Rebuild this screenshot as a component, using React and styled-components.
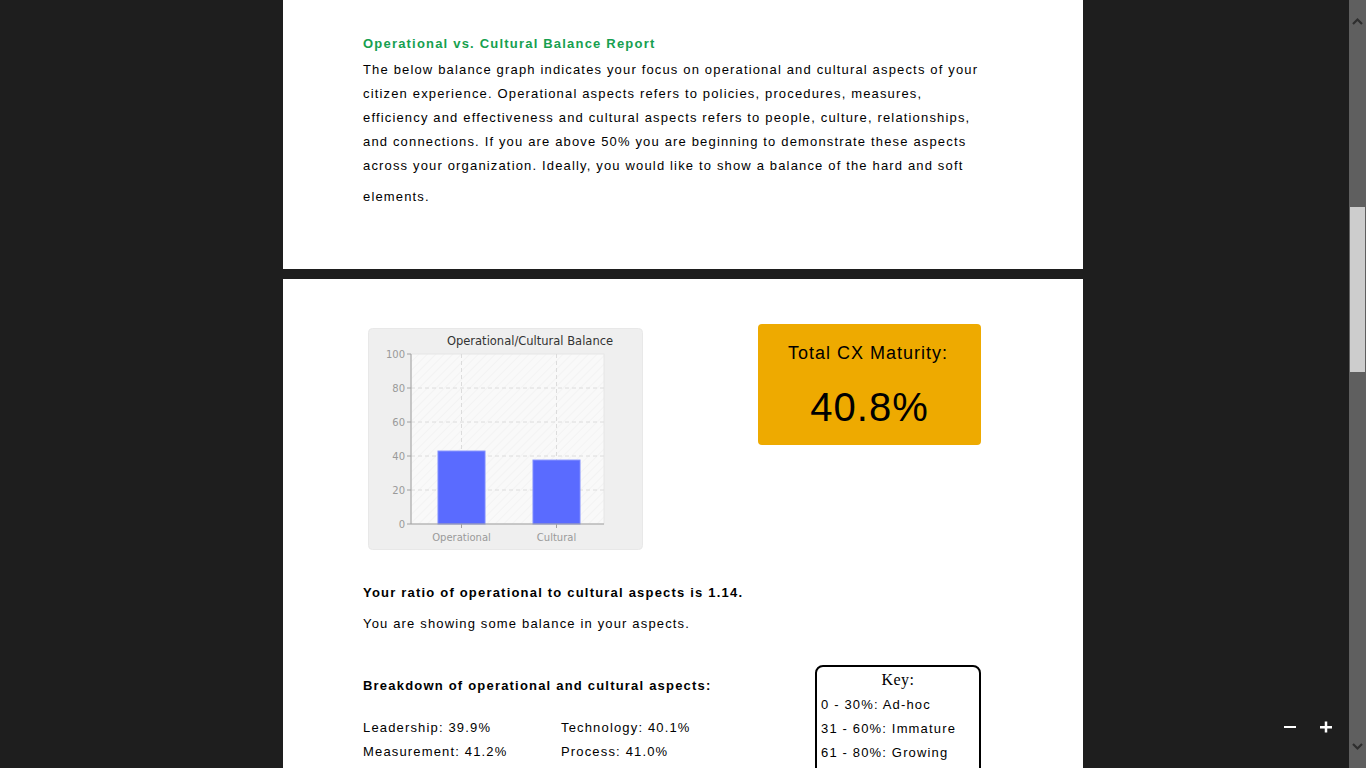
import React from 'react';
import styled, { createGlobalStyle } from 'styled-components';

const DARK = '#1e1e1e';
const TEXT = '#000000';
const GREEN = '#16a04f';
const GOLD = '#eeaa00';

const GlobalStyle = createGlobalStyle`
  html, body {
    margin: 0;
    padding: 0;
    background: ${DARK};
    overflow: hidden;
  }
  body {
    font-family: "Liberation Sans", Arial, sans-serif;
  }
`;

const Viewer = styled.div`
  position: relative;
  width: 1366px;
  height: 768px;
  overflow: hidden;
  background: ${DARK};
  display: flex;
  flex-direction: column;
  align-items: center;
  gap: 10px;
`;

const Page = styled.div`
  width: 800px;
  height: ${p => p.$height}px;
  flex-shrink: 0;
  background: #ffffff;
  box-sizing: border-box;
  padding: ${p => p.$top}px 102px 0 80px;
  color: ${TEXT};
  font-size: 13px;
  letter-spacing: 1.16px;
  line-height: 24px;
`;

const Heading = styled.div`
  color: ${GREEN};
  font-weight: bold;
  letter-spacing: 1.2px;
  margin-bottom: 2px;
`;

const Line = styled.div`
  white-space: nowrap;
  margin-top: ${p => p.$gap || 0}px;
`;

const TopRow = styled.div`
  display: flex;
  justify-content: space-between;
  align-items: flex-start;
`;

const ChartWrap = styled.div`
  margin: 4px 0 0 5px;
  width: 275px;
  height: 222px;
  letter-spacing: 0;
`;

const MaturityBox = styled.div`
  width: 223px;
  height: 121px;
  background: ${GOLD};
  border-radius: 4px;
  display: flex;
  flex-direction: column;
  align-items: center;
  letter-spacing: 1px;
`;

const MaturityLabel = styled.div`
  font-size: 18px;
  line-height: 22px;
  margin-top: 18px;
  margin-left: -3px;
`;

const MaturityValue = styled.div`
  font-size: 40px;
  line-height: 46px;
  margin-top: 20px;
  letter-spacing: 1px;
`;

const Bold = styled.div`
  font-weight: bold;
  letter-spacing: 1.2px;
  margin-top: ${p => p.$gap || 0}px;
`;

const Plain = styled.div`
  margin-top: ${p => p.$gap || 0}px;
`;

const BottomRow = styled.div`
  display: flex;
  justify-content: space-between;
  align-items: flex-start;
  margin-top: 29px;
`;

const Breakdown = styled.div`
  padding-top: 9px;
`;

const Scores = styled.div`
  display: grid;
  grid-template-columns: 198px auto;
  margin-top: 18px;
`;

const KeyBox = styled.div`
  width: 166px;
  height: 140px;
  box-sizing: border-box;
  border: 2px solid #000;
  border-radius: 8px;
  padding: 0 4px;
`;

const KeyTitle = styled.div`
  font-family: "Liberation Serif", "Times New Roman", serif;
  font-size: 16px;
  letter-spacing: 0.5px;
  text-align: center;
  line-height: 24px;
  margin-top: 1px;
  margin-bottom: 1px;
`;

const Scrollbar = styled.div`
  position: absolute;
  top: 0;
  right: 0;
  width: 17px;
  height: 768px;
  background: #5f5f5f;
`;

const ScrollThumb = styled.div`
  position: absolute;
  left: 1px;
  top: 207px;
  width: 15px;
  height: 165px;
  background: #cdcdcd;
`;

const ScrollArrow = styled.svg`
  position: absolute;
  left: 3px;
  ${p => (p.$down ? 'top: 743px;' : 'top: 17px;')}
`;

const ZoomBar = styled.div`
  position: absolute;
  left: 1279px;
  top: 716px;
  display: flex;
  gap: 14px;
`;

const ZoomButton = styled.button`
  width: 22px;
  height: 22px;
  padding: 0;
  border: none;
  background: transparent;
  display: flex;
  align-items: center;
  justify-content: center;
  cursor: pointer;
`;

const BalanceChart = () => {
  const plotX = 43;
  const plotY = 26;
  const plotW = 193;
  const plotH = 170;
  const yOf = v => plotY + plotH - (v * plotH) / 100;
  const bars = [
    { label: 'Operational', value: 42.9, x: 70 },
    { label: 'Cultural', value: 37.6, x: 165 },
  ];
  const axisFont = '"DejaVu Sans", Verdana, sans-serif';

  return (
    <svg width="275" height="222" viewBox="0 0 275 222">
      <defs>
        <pattern id="hatch" width="6" height="6" patternUnits="userSpaceOnUse" patternTransform="rotate(45)">
          <rect width="6" height="6" fill="#f9f9f9" />
          <line x1="0" y1="0" x2="0" y2="6" stroke="#f1f1f1" strokeWidth="1.5" />
        </pattern>
      </defs>
      <rect x="0.5" y="0.5" width="274" height="221" rx="4" fill="#efefef" stroke="#e8e8e8" />
      <text x="162" y="17" textAnchor="middle" fontFamily={axisFont} fontSize="11.5" fill="#333">
        Operational/Cultural Balance
      </text>
      <rect x={plotX} y={plotY} width={plotW} height={plotH} fill="url(#hatch)" stroke="#e6e6e6" />
      {[20, 40, 60, 80].map(v => (
        <line key={v} x1={plotX} x2={plotX + plotW} y1={yOf(v)} y2={yOf(v)} stroke="#dcdcdc" strokeDasharray="4 3" />
      ))}
      {bars.map(b => (
        <line key={b.label} x1={b.x + 23.5} x2={b.x + 23.5} y1={plotY} y2={plotY + plotH} stroke="#dcdcdc" strokeDasharray="4 3" />
      ))}
      {bars.map(b => (
        <rect
          key={b.label}
          x={b.x}
          y={yOf(b.value)}
          width="47"
          height={plotY + plotH - yOf(b.value)}
          fill="#5a6bff"
          stroke="#7d8bff"
          strokeWidth="1"
        />
      ))}
      <line x1={plotX} x2={plotX} y1={plotY} y2={plotY + plotH} stroke="#a0a0a0" />
      <line x1={plotX} x2={plotX + plotW} y1={plotY + plotH} y2={plotY + plotH} stroke="#a0a0a0" />
      {[0, 20, 40, 60, 80, 100].map(v => (
        <g key={v}>
          <line x1={plotX - 4} x2={plotX} y1={yOf(v)} y2={yOf(v)} stroke="#a0a0a0" />
          <text x={plotX - 6} y={yOf(v) + 3.5} textAnchor="end" fontFamily={axisFont} fontSize="10" fill="#9a9a9a">
            {v}
          </text>
        </g>
      ))}
      {bars.map(b => (
        <g key={b.label}>
          <line x1={b.x + 23.5} x2={b.x + 23.5} y1={plotY + plotH} y2={plotY + plotH + 4} stroke="#a0a0a0" />
          <text x={b.x + 23.5} y="213" textAnchor="middle" fontFamily={axisFont} fontSize="10" fill="#9a9a9a">
            {b.label}
          </text>
        </g>
      ))}
    </svg>
  );
};

const introLines = [
  'The below balance graph indicates your focus on operational and cultural aspects of your',
  'citizen experience. Operational aspects refers to policies, procedures, measures,',
  'efficiency and effectiveness and cultural aspects refers to people, culture, relationships,',
  'and connections. If you are above 50% you are beginning to demonstrate these aspects',
  'across your organization. Ideally, you would like to show a balance of the hard and soft',
];

const scores = [
  ['Leadership', '39.9%'],
  ['Technology', '40.1%'],
  ['Measurement', '41.2%'],
  ['Process', '41.0%'],
];

const keyLines = ['0 - 30%: Ad-hoc', '31 - 60%: Immature', '61 - 80%: Growing'];

const App = () => {
  return (
    <Viewer>
      <GlobalStyle />
      <Page $height={269} $top={32}>
        <Heading>Operational vs. Cultural Balance Report</Heading>
        {introLines.map(l => (
          <Line key={l}>{l}</Line>
        ))}
        <Line $gap={7}>elements.</Line>
      </Page>

      <Page $height={1000} $top={45}>
        <TopRow>
          <ChartWrap>
            <BalanceChart />
          </ChartWrap>
          <MaturityBox>
            <MaturityLabel>Total CX Maturity:</MaturityLabel>
            <MaturityValue>40.8%</MaturityValue>
          </MaturityBox>
        </TopRow>

        <Bold $gap={31}>Your ratio of operational to cultural aspects is 1.14.</Bold>
        <Plain $gap={7}>You are showing some balance in your aspects.</Plain>

        <BottomRow>
          <Breakdown>
            <Bold>Breakdown of operational and cultural aspects:</Bold>
            <Scores>
              {scores.map(([name, val]) => (
                <div key={name}>
                  {name}: {val}
                </div>
              ))}
            </Scores>
          </Breakdown>
          <KeyBox>
            <KeyTitle>Key:</KeyTitle>
            {keyLines.map(k => (
              <div key={k}>{k}</div>
            ))}
          </KeyBox>
        </BottomRow>
      </Page>

      <Scrollbar>
        <ScrollArrow width="11" height="8" viewBox="0 0 11 8">
          <polyline points="1,7 5.5,2.5 10,7" fill="none" stroke="#2e2e2e" strokeWidth="2.2" />
        </ScrollArrow>
        <ScrollThumb />
        <ScrollArrow $down width="11" height="8" viewBox="0 0 11 8">
          <polyline points="1,1 5.5,5.5 10,1" fill="none" stroke="#2e2e2e" strokeWidth="2.2" />
        </ScrollArrow>
      </Scrollbar>

      <ZoomBar>
        <ZoomButton aria-label="Zoom out">
          <svg width="12" height="12" viewBox="0 0 12 12">
            <rect x="0" y="5" width="12" height="2" fill="#fff" />
          </svg>
        </ZoomButton>
        <ZoomButton aria-label="Zoom in">
          <svg width="12" height="12" viewBox="0 0 12 12">
            <rect x="0" y="5" width="12" height="2.5" fill="#fff" />
            <rect x="4.75" y="0.5" width="2.5" height="11" fill="#fff" />
          </svg>
        </ZoomButton>
      </ZoomBar>
    </Viewer>
  );
};

export default App;
